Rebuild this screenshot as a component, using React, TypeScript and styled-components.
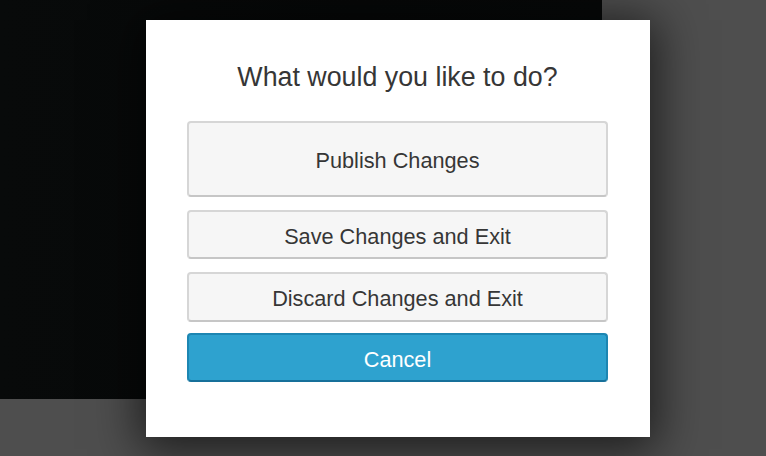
import React from "react";
import styled, { createGlobalStyle } from "styled-components";

const Global = createGlobalStyle`
  html, body { margin: 0; padding: 0; }
  body {
    width: 766px;
    height: 456px;
    overflow: hidden;
    background: #4e4e4e;
    font-family: "Liberation Sans", Arial, sans-serif;
  }
`;

const Stage = styled.div`
  position: relative;
  width: 766px;
  height: 456px;
`;

const DarkPanel = styled.div`
  width: 602px;
  height: 399px;
  background: linear-gradient(90deg, #080a0a 0%, #060808 60%, #070909 100%);
`;

const Dialog = styled.div`
  position: absolute;
  left: 146px;
  top: 20px;
  width: 504px;
  height: 417px;
  box-sizing: border-box;
  background: #ffffff;
  box-shadow: 0 6px 44px 6px rgba(0, 0, 0, 0.65);
  padding: 41px 42px 0 41px;
  display: flex;
  flex-direction: column;
`;

const Title = styled.h2`
  margin: 0 0 28px;
  font-family: "Liberation Sans", Arial, sans-serif;
  font-weight: normal;
  font-size: 26.8px;
  line-height: 32px;
  color: #363636;
  text-align: center;
`;

const Actions = styled.div`
  display: flex;
  flex-direction: column;
`;

const ActionButton = styled.button<{ $h: number; $gap: number; $primary?: boolean }>`
  box-sizing: border-box;
  width: 100%;
  height: ${(p) => p.$h}px;
  margin-top: ${(p) => p.$gap}px;
  border-radius: 4px;
  border: 2px solid ${(p) => (p.$primary ? "#1d86b2" : "#d6d6d6")};
  border-bottom-color: ${(p) => (p.$primary ? "#16709a" : "#c6c6c6")};
  background: ${(p) => (p.$primary ? "#2ea2cf" : "#f6f6f6")};
  color: ${(p) => (p.$primary ? "#ffffff" : "#363636")};
  font-family: "Liberation Sans", Arial, sans-serif;
  font-size: 21.7px;
  line-height: 1;
  padding: 4px 0 0;
  cursor: pointer;
  display: flex;
  align-items: center;
  justify-content: center;
`;

export default function App() {
  return (
    <Stage>
      <Global />
      <DarkPanel />
      <Dialog>
        <Title>What would you like to do?</Title>
        <Actions>
          <ActionButton $h={76} $gap={0}>Publish Changes</ActionButton>
          <ActionButton $h={49} $gap={13}>Save Changes and Exit</ActionButton>
          <ActionButton $h={50} $gap={13}>Discard Changes and Exit</ActionButton>
          <ActionButton $h={49} $gap={11} $primary>Cancel</ActionButton>
        </Actions>
      </Dialog>
    </Stage>
  );
}
